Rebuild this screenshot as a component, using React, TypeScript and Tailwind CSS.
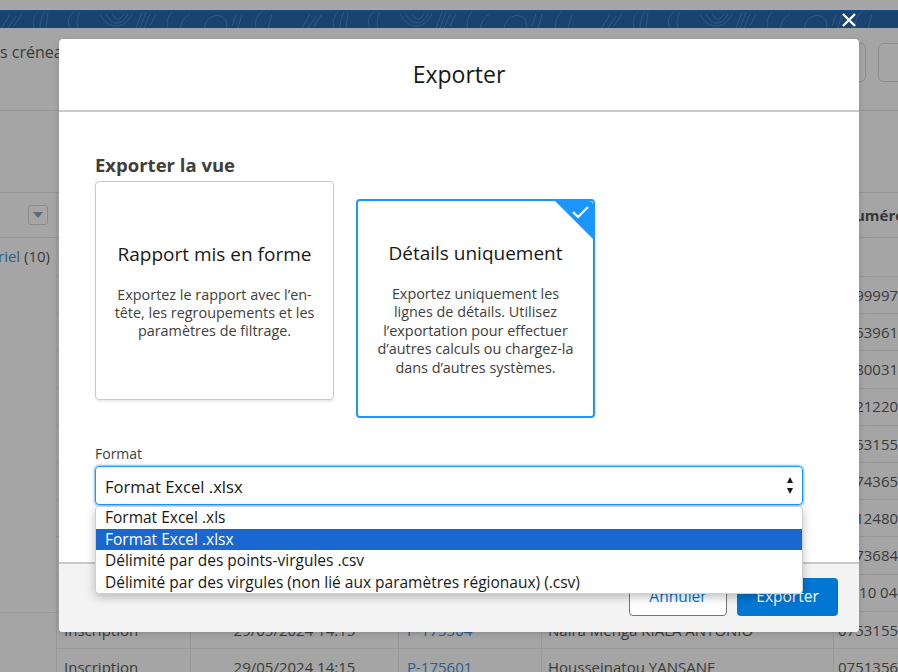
import React from 'react';

const rows = [
  '07999979',
  '0753961',
  '0780031',
  '0721220',
  '0753155',
  '0774365',
  '0712480',
  '0773684',
  '07 10 04 88',
];

const bottomRows = [
  { type: 'Inscription', date: '29/05/2024 14:15', ref: 'P-175504', name: 'Naira Menga KIALA ANTONIO', phone: '0753155' },
  { type: 'Inscription', date: '29/05/2024 14:15', ref: 'P-175601', name: 'Housseinatou YANSANE', phone: '0751356' },
];

const options = [
  'Format Excel .xls',
  'Format Excel .xlsx',
  'Délimité par des points-virgules .csv',
  'Délimité par des virgules (non lié aux paramètres régionaux) (.csv)',
];

const BandPattern: React.FC = () => (
  <svg width="898" height="16" viewBox="0 0 898 16" className="block">
    <g fill="none" stroke="#3b6690" strokeWidth="0.8" opacity="0.8">
      {[0, 300, 600].map((o) => (
        <g key={o} transform={`translate(${o} 0)`}>
          <path d="M2 16 L10 2 M8 16 L16 4 M14 14 L22 2" />
          <path d="M34 16 C32 10 34 4 38 0 M40 16 C40 10 42 4 44 0 M46 16 L48 0" />
          <path d="M70 16 C66 8 70 2 74 0 M78 16 C76 10 78 4 80 0" />
          <path d="M100 2 C108 18 124 18 132 2 M106 2 C112 14 122 14 128 2 M112 2 C116 9 120 9 124 2" />
          <path d="M136 16 L142 0 M140 16 L146 0 M144 16 L150 2 M150 14 L156 2" />
          <path d="M168 16 C166 10 168 4 172 0 M180 16 C182 8 186 4 190 2" />
          <path d="M204 16 C206 6 214 2 220 4 C226 6 228 12 226 16 M232 14 L236 2 M238 16 L242 2" />
          <path d="M256 16 C254 8 258 2 262 0 M268 16 L272 2" />
        </g>
      ))}
    </g>
  </svg>
);

const Row: React.FC<{ phone: string; children?: React.ReactNode }> = ({ phone, children }) => (
  <div className="flex h-[37.2px] items-center border-b border-[#999999] text-[15px] text-[#3b3b3b]">
    {children ?? (
      <>
        <div className="h-full w-[134px] shrink-0 border-r border-[#999999]" />
        <div className="h-full w-[208px] shrink-0 border-r border-[#999999]" />
        <div className="h-full w-[143px] shrink-0 border-r border-[#999999]" />
        <div className="h-full w-[292px] shrink-0 border-r border-[#999999]" />
      </>
    )}
    <div className="whitespace-nowrap pl-[4px]">{phone}</div>
  </div>
);

const CheckCorner: React.FC = () => (
  <svg width="38" height="38" viewBox="0 0 38 38" className="absolute right-0 top-0">
    <path d="M0 0 H34 A4 4 0 0 1 38 4 V38 Z" fill="#1b96ff" />
    <path d="M18 11 L23 16 L33 6" fill="none" stroke="#ffffff" strokeWidth="2.2" />
  </svg>
);

export default function App() {
  return (
    <div className="relative h-[672px] w-[898px] overflow-hidden bg-[#a5a5a5] font-['Open_Sans',sans-serif]">
      {/* Page behind the backdrop */}
      <div className="h-[10px] bg-[#a6a6a6]" />
      <div className="h-[18px] bg-[#1a446f]">
        <div className="h-[2px] bg-[#0d4c87]" />
        <BandPattern />
      </div>
      <div className="flex h-[83px] items-start border-b border-[#979797]">
        <div className="mt-[12px] whitespace-nowrap text-[16px] text-[#3a3a3a]">s créneaux</div>
        <div className="ml-auto mt-[15px] flex gap-[12px]">
          <div className="h-[39px] w-[40px] rounded-[5px] border border-[#8e8e8e]" />
          <div className="mr-[-20px] h-[39px] w-[40px] rounded-[5px] border border-[#8e8e8e]" />
        </div>
      </div>
      <div className="h-[81px]" />
      <div className="flex h-[46px] border-y border-[#959595]">
        <div className="flex w-[57px] shrink-0 items-center justify-end border-r border-[#999999] pr-[8px]">
          <div className="flex h-[20px] w-[20px] items-center justify-center rounded-[3px] border border-[#8c8c8c]">
            <div className="h-0 w-0 border-x-[5px] border-t-[6px] border-x-transparent border-t-[#5b6b7c]" />
          </div>
        </div>
        <div className="flex min-w-0 flex-1 items-center justify-end">
          <div className="w-[43px] whitespace-nowrap text-[15px] font-bold text-[#363636]">uméro</div>
        </div>
      </div>
      <div className="flex">
        <div className="w-[57px] shrink-0 border-r border-[#999999]">
          <div className="h-[375px] border-b border-[#999999] pt-[7px]">
            <div className="ml-[-2px] whitespace-nowrap text-[15px] text-[#2f5d8e]">
              riel <span className="text-[#3b3b3b]">(10)</span>
            </div>
          </div>
        </div>
        <div className="min-w-0 flex-1 overflow-hidden">
          <div className="h-[39px] border-b border-[#999999]" />
          {rows.map((p) => (
            <Row key={p} phone={p} />
          ))}
          {bottomRows.map((r) => (
            <Row key={r.ref} phone={r.phone}>
              <div className="flex h-full w-[134px] shrink-0 items-center border-r border-[#999999] pl-[7px]">{r.type}</div>
              <div className="flex h-full w-[208px] shrink-0 items-center justify-center border-r border-[#999999]">{r.date}</div>
              <div className="flex h-full w-[143px] shrink-0 items-center border-r border-[#999999] pl-[8px] text-[#2f5d8e]">{r.ref}</div>
              <div className="flex h-full w-[292px] shrink-0 items-center border-r border-[#999999] pl-[6px]">{r.name}</div>
            </Row>
          ))}
        </div>
      </div>

      {/* Close button */}
      <svg width="14" height="14" viewBox="0 0 14 14" className="absolute left-[842px] top-[13px]">
        <path d="M1 1 L13 13 M13 1 L1 13" stroke="#ffffff" strokeWidth="2.4" />
      </svg>

      {/* Modal */}
      <div className="absolute left-[59px] top-[39px] flex h-[593px] w-[800px] flex-col rounded-[4px] bg-white shadow-[0_2px_6px_rgba(0,0,0,0.15)]">
        <div className="flex h-[73px] shrink-0 items-center justify-center border-b-2 border-[#c9c9c9]">
          <h1 className="text-[23px] text-[#181818]">Exporter</h1>
        </div>

        <div className="relative flex-1 pl-[36px] pr-[56px] pt-[41px]">
          <h2 className="text-[18.5px] font-bold leading-[24px] text-[#3e3e3c]">Exporter la vue</h2>
          <div className="mt-[4px] flex items-start gap-[22px]">
            <div className="flex h-[219px] w-[239px] flex-col items-center justify-center rounded-[4px] border border-[#c9c9c9] px-[16px] text-center shadow-[0_2px_2px_rgba(0,0,0,0.08)]">
              <div className="whitespace-nowrap text-[19px] leading-[26px] text-[#181818]">Rapport mis en forme</div>
              <p className="mt-[19px] whitespace-nowrap text-[14.4px] leading-[18px] text-[#3e3e3c]">
                Exportez le rapport avec l’en-
                <br />
                tête, les regroupements et les
                <br />
                paramètres de filtrage.
              </p>
            </div>
            <div className="relative mt-[18px] flex h-[219px] w-[239px] flex-col items-center justify-center rounded-[4px] border-2 border-[#1b96ff] px-[14px] text-center">
              <CheckCorner />
              <div className="whitespace-nowrap text-[19px] leading-[26px] text-[#181818]">Détails uniquement</div>
              <p className="mt-[19px] whitespace-nowrap text-[14.4px] leading-[18.5px] text-[#3e3e3c]">
                Exportez uniquement les
                <br />
                lignes de détails. Utilisez
                <br />
                l’exportation pour effectuer
                <br />
                d’autres calculs ou chargez-la
                <br />
                dans d’autres systèmes.
              </p>
            </div>
          </div>

          <label className="mt-[27px] block text-[14px] leading-[18px] text-[#3e3e3c]">Format</label>
          <div className="relative mt-[3px] flex h-[39px] items-center rounded-[4px] border border-[#1b96ff] pl-[9px] shadow-[0_0_3px_#0176d3]">
            <span className="pt-[3px] text-[16.6px] text-[#181818]">Format Excel .xlsx</span>
            <div className="ml-auto mr-[9px] flex flex-col items-center gap-[5px]">
              <div className="h-0 w-0 border-x-[3.5px] border-b-[6px] border-x-transparent border-b-[#181818]" />
              <div className="h-0 w-0 border-x-[3.5px] border-t-[6px] border-x-transparent border-t-[#181818]" />
            </div>
            <ul className="absolute left-[-1px] right-[-1px] top-[39px] z-10 overflow-hidden rounded-[4px] border border-[#d0d0d0] bg-white shadow-[0_3px_10px_rgba(0,0,0,0.25)]">
              {options.map((o, i) => (
                <li
                  key={o}
                  className={
                    i === 1
                      ? 'flex h-[21.5px] items-center whitespace-nowrap bg-[#1a67d2] px-[9px] text-[15.5px] text-white'
                      : 'flex h-[21.5px] items-center whitespace-nowrap px-[9px] text-[15.5px] text-[#181818]'
                  }
                >
                  {o}
                </li>
              ))}
            </ul>
          </div>
        </div>

        <div className="flex h-[70px] shrink-0 items-start justify-end gap-[10px] rounded-b-[4px] border-t-2 border-[#c9c9c9] bg-[#f3f3f3] pr-[21px] pt-[14px]">
          <button className="h-[38px] w-[98px] rounded-[4px] border border-[#747474] bg-white text-[15.5px] text-[#0176d3]">
            Annuler
          </button>
          <button className="h-[38px] w-[101px] rounded-[4px] bg-[#0176d3] text-[15.5px] text-white">
            Exporter
          </button>
        </div>
      </div>
    </div>
  );
}
